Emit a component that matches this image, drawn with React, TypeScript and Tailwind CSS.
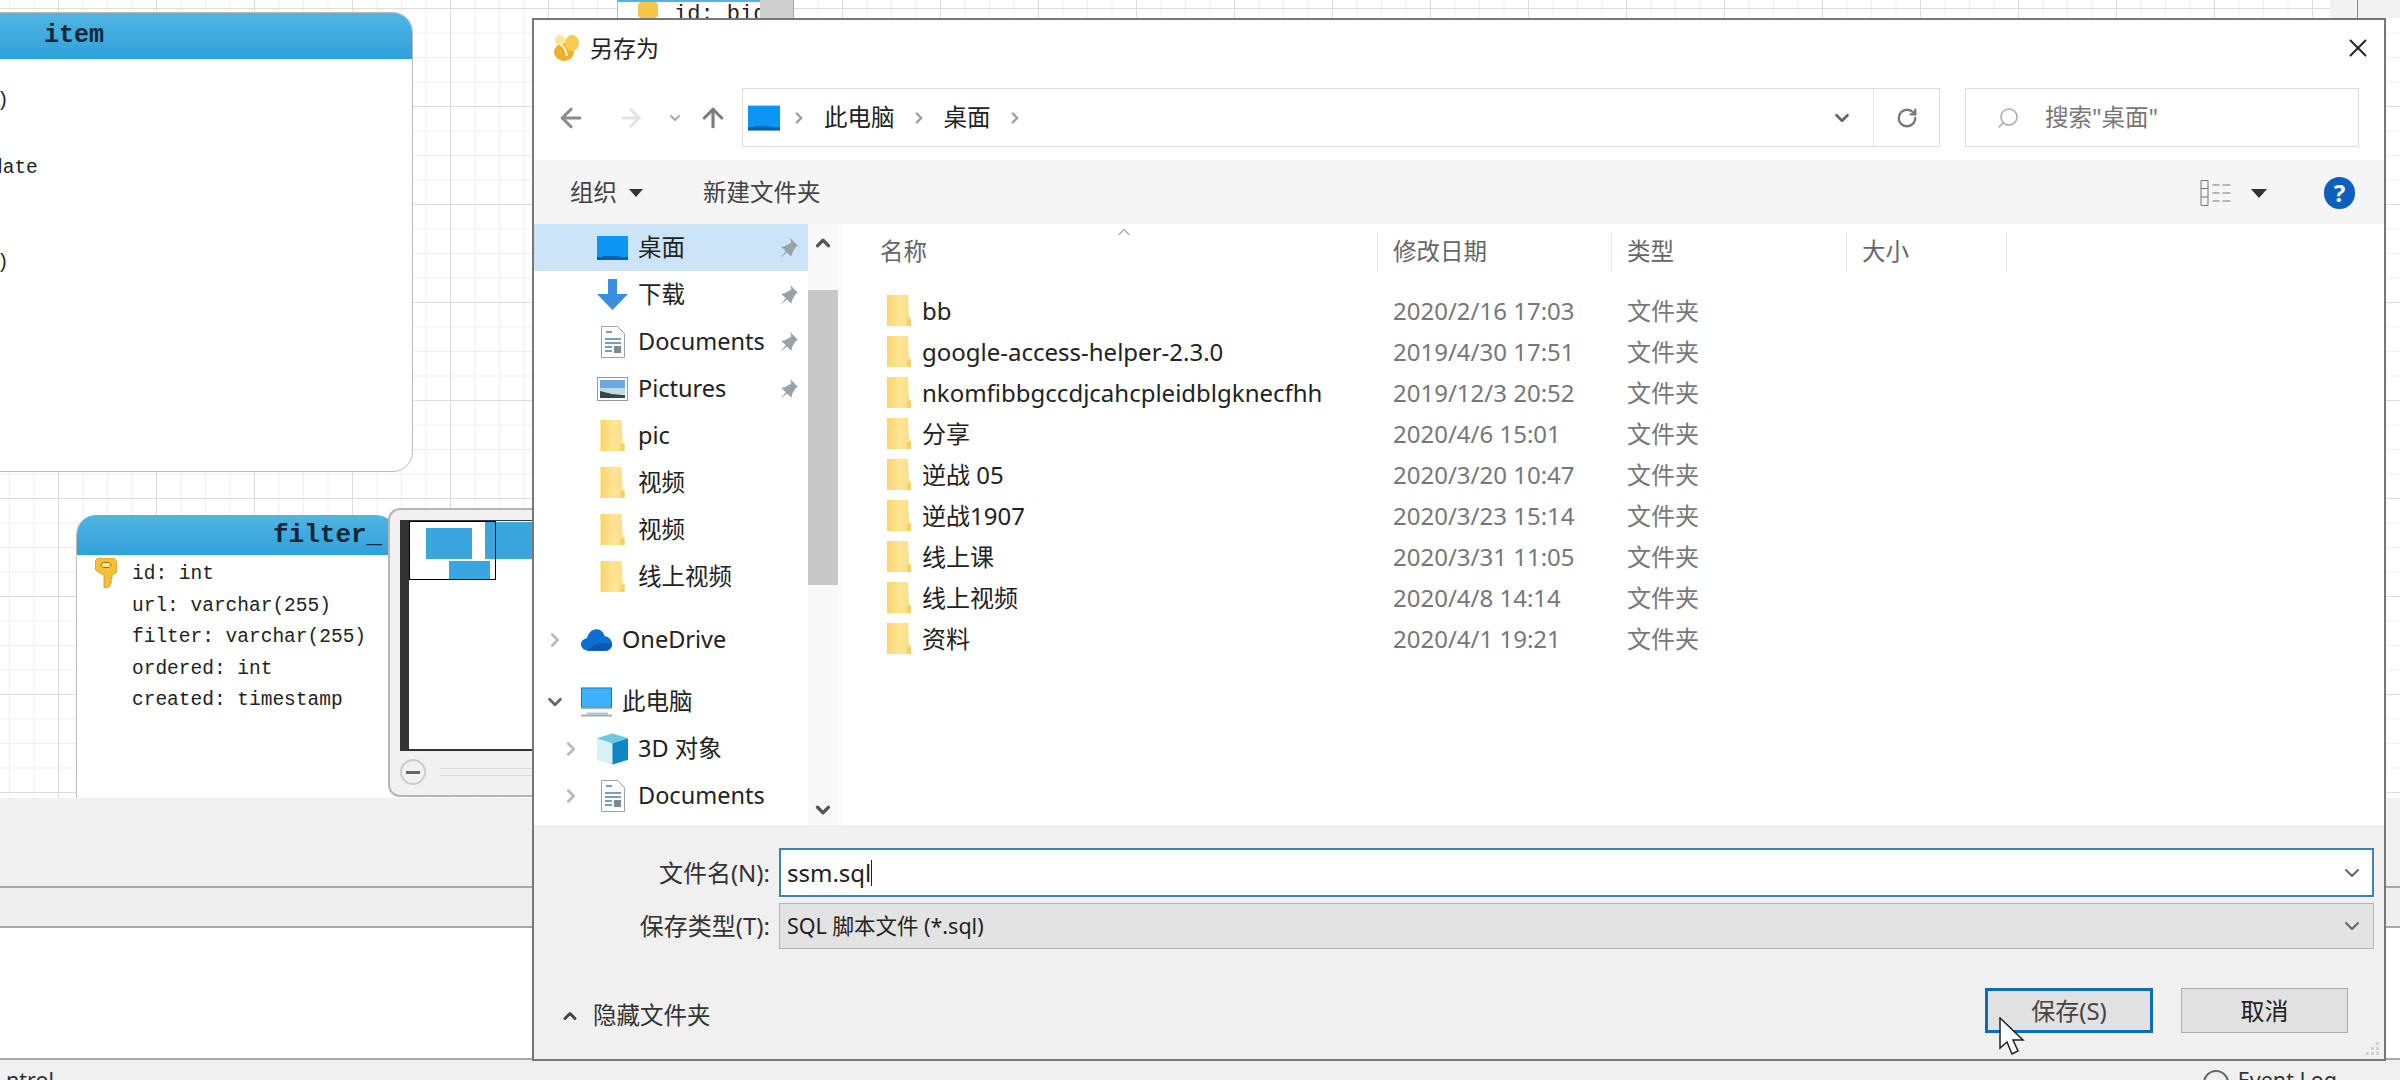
import React from "react";
import { ArrowLeft, ArrowRight, ArrowUp, ChevronDown, ChevronRight, ChevronUp, RotateCw, Search, X } from "lucide-react";

const SANS = "font-['Noto_Sans','Noto_Sans_CJK_SC',sans-serif]";
const MONO = "font-['Liberation_Mono','Noto_Sans_CJK_SC',monospace]";

const files = [
  { name: "bb", date: "2020/2/16 17:03" },
  { name: "google-access-helper-2.3.0", date: "2019/4/30 17:51" },
  { name: "nkomfibbgccdjcahcpleidblgknecfhh", date: "2019/12/3 20:52" },
  { name: "分享", date: "2020/4/6 15:01" },
  { name: "逆战 05", date: "2020/3/20 10:47" },
  { name: "逆战1907", date: "2020/3/23 15:14" },
  { name: "线上课", date: "2020/3/31 11:05" },
  { name: "线上视频", date: "2020/4/8 14:14" },
  { name: "资料", date: "2020/4/1 19:21" },
];

const filterFields = ["id: int", "url: varchar(255)", "filter: varchar(255)", "ordered: int", "created: timestamp"];

function Folder({ className }: { className: string }) {
  return (
    <svg viewBox="0 0 24 31" className={className}>
      <defs>
        <linearGradient id="folderFill" x1="0" x2="1" y1="0" y2="0">
          <stop offset="0" stopColor="#fbd56c" />
          <stop offset="0.55" stopColor="#ffe596" />
          <stop offset="1" stopColor="#fcdc85" />
        </linearGradient>
      </defs>
      <path d="M0 0h21l1 22 2 1v8H0z" fill="url(#folderFill)" />
      <path d="M20 24h4v7h-4z" fill="#f7cf63" />
    </svg>
  );
}

function Desktop({ className }: { className: string }) {
  return (
    <svg viewBox="0 0 31 24" className={className}>
      <rect width="31" height="24" fill="#0b96f5" />
      <rect y="21" width="31" height="3" fill="#0a5fa8" />
      <rect x="6" y="20" width="16" height="1" fill="#0a5fa8" />
    </svg>
  );
}

function Download() {
  return (
    <svg viewBox="0 0 31 31" className="h-[31px] w-[31px]">
      <path d="M11 0h9v15h11L15.500 31 0 15h11z" fill="#3a8de0" />
    </svg>
  );
}

function DocIcon() {
  return (
    <svg viewBox="0 0 24 32" className="h-[32px] w-[24px]">
      <path d="M.5.500h16l7 7v24H.500z" fill="#fff" stroke="#98a3ad" />
      <path d="M5 6h6M4 13h16M4 17h16M4 21h7M4 25h7" stroke="#4d7fb0" strokeWidth="1.500" />
      <rect x="13" y="20" width="7" height="7" fill="#7d8a94" />
    </svg>
  );
}

function PicIcon() {
  return (
    <svg viewBox="0 0 31 24" className="h-[24px] w-[31px]">
      <rect x=".5" y=".5" width="30" height="23" fill="#fff" stroke="#8f9ca8" />
      <rect x="3" y="3" width="25" height="8" fill="#6aa8de" />
      <rect x="3" y="11" width="25" height="6" fill="#c9d7de" />
      <path d="M3 14l12 3 13 1v3H3z" fill="#2f4a4a" />
    </svg>
  );
}

function Cloud() {
  return (
    <svg viewBox="0 0 32 22" className="h-[22px] w-[32px]">
      <path d="M8 22C3 22 0 19 0 15.500S3 9.500 6 9.500C7.500 4 11 0 16 0c4 0 7 2.500 8.500 7C29 7.500 32 11 32 15s-3 7-7 7z" fill="#0f6fd0" />
      <path d="M6 22c6-6 12-9 26-7 0 4-3 7-7 7z" fill="#0a58b0" />
    </svg>
  );
}

function Monitor() {
  return (
    <svg viewBox="0 0 32 30" className="h-[30px] w-[32px]">
      <rect x=".5" y=".5" width="31" height="20" fill="#3fb0fb" stroke="#1f6fae" />
      <rect y="20" width="32" height="2" fill="#8a99a6" />
      <rect x="6" y="26" width="22" height="2" fill="#b5bcc2" />
      <rect y="28" width="32" height="2" fill="#a4abb1" />
    </svg>
  );
}

function Cube() {
  return (
    <svg viewBox="0 0 32 32" className="h-[32px] w-[32px]">
      <path d="M16 0l16 5v22l-16 5-16-5V5z" fill="#a9e2ef" />
      <path d="M0 5l16 5v22L0 27z" fill="#d8f1f5" />
      <path d="M16 10l16-5v22l-16 5z" fill="#0f86c4" />
      <path d="M0 5l16-5 16 5-16 5z" fill="#6fc7e2" />
    </svg>
  );
}

function Pin() {
  return (
    <svg viewBox="0 0 20 20" className="h-[22px] w-[22px]">
      <path d="M12 1l7 7-2 1-3 5-1 4-4-4-6 5 5-6-4-4 4-1 5-3z" fill="#98a2ab" />
    </svg>
  );
}

function KeyIcon({ className }: { className: string }) {
  return (
    <svg viewBox="0 0 22 30" className={className}>
      <path d="M3 0h16l3 4v10l-5 3v4l-2 1 2 2-2 2v2l-3 2H9V17l-6-3-3-3V3z" fill="#f7bf35" stroke="#c9962a" strokeWidth=".8" />
      <ellipse cx="11" cy="7" rx="5" ry="2.600" fill="#fbe39a" stroke="#9a7414" />
    </svg>
  );
}

function SideRow({ icon, label, pin, selected, indent }: { icon: React.ReactNode; label: string; pin?: boolean; selected?: boolean; indent?: React.ReactNode }) {
  return (
    <div className={`flex h-[47px] items-center text-[23.500px] text-[#222] ${selected ? "bg-[#cce4f8]" : ""}`}>
      {indent}
      <span className="flex w-[31px] shrink-0 justify-center">{icon}</span>
      <span className="ml-[10px] whitespace-nowrap">{label}</span>
      {pin && <span className="ml-auto mr-[9px]"><Pin /></span>}
    </div>
  );
}

function SaveDialog() {
  const pinned = <span className="w-[63px] shrink-0" />;
  const treeRoot = (open: boolean) => (
    <span className="flex w-[22px] shrink-0 justify-center">
      {open ? <ChevronDown className="size-[22px] text-[#666]" strokeWidth={3} /> : <ChevronRight className="size-[22px] text-[#bbb]" strokeWidth={3} />}
    </span>
  );
  return (
    <div className={`absolute left-[532px] top-[18px] flex h-[1043px] w-[1854px] flex-col border-2 border-[#777] bg-white ${SANS}`}>
      {/* title bar */}
      <div className="flex h-[56px] shrink-0 items-center pl-[18px] pr-[11px]">
        <svg viewBox="0 0 28 28" className="h-[28px] w-[28px]">
          <ellipse cx="12" cy="18" rx="10" ry="9" fill="#eeb02a" />
          <ellipse cx="20" cy="9" rx="7" ry="8" fill="#f7cc4f" />
          <ellipse cx="8" cy="6" rx="5" ry="5" fill="#fbe59a" />
          <path d="M8 10c4 2 6 6 7 12" stroke="#fff3c4" strokeWidth="2" fill="none" />
        </svg>
        <span className="ml-[10px] text-[23px] text-[#222]">另存为</span>
        <X className="ml-auto size-[30px] text-[#222]" strokeWidth={1.500} />
      </div>
      {/* navigation row */}
      <div className="flex h-[84px] shrink-0 items-start pt-[12px]">
        <div className="flex h-[59px] w-[208px] shrink-0 items-center pl-[22px]">
          <ArrowLeft className="size-[30px] text-[#8a8a8a]" strokeWidth={2.500} />
          <ArrowRight className="ml-[31px] size-[28px] text-[#e2e2e2]" strokeWidth={2.500} />
          <ChevronDown className="ml-[22px] size-[16px] text-[#aaa]" strokeWidth={3} />
          <ArrowUp className="ml-[15px] size-[30px] text-[#7c7c7c]" strokeWidth={2.500} />
        </div>
        <div className="flex h-[59px] w-[1198px] items-center border border-[#dedede] pl-[5px] text-[23.500px] text-[#222]">
          <Desktop className="h-[26px] w-[32px]" />
          <ChevronRight className="ml-[10px] size-[18px] text-[#999]" strokeWidth={3} />
          <span className="ml-[16px]">此电脑</span>
          <ChevronRight className="ml-[15px] size-[18px] text-[#999]" strokeWidth={3} />
          <span className="ml-[16px]">桌面</span>
          <ChevronRight className="ml-[15px] size-[18px] text-[#999]" strokeWidth={3} />
          <ChevronDown className="ml-auto mr-[20px] size-[22px] text-[#666]" strokeWidth={3} />
          <div className="flex h-full w-[66px] items-center justify-center border-l border-[#e4e4e4]">
            <RotateCw className="size-[22px] text-[#777]" strokeWidth={2.500} />
          </div>
        </div>
        <div className="ml-[25px] flex h-[59px] w-[394px] items-center border border-[#dedede] pl-[30px] text-[23.500px] text-[#777]">
          <Search className="size-[24px] -scale-x-100 text-[#aaa]" strokeWidth={1.500} />
          <span className="ml-[25px]">搜索"桌面"</span>
        </div>
      </div>
      {/* toolbar */}
      <div className="flex h-[64px] shrink-0 items-center bg-[#f5f5f5] pl-[36px] pr-[29px] pt-[2px] text-[23.500px] text-[#444]">
        <span>组织</span>
        <span className="ml-[12px] h-0 w-0 border-x-[7px] border-t-[8px] border-x-transparent border-t-[#333]" />
        <span className="ml-[60px]">新建文件夹</span>
        <svg viewBox="0 0 32 26" className="ml-auto h-[26px] w-[33px]">
          <path d="M.5.500h7v25h-7zM.5 8.500h7M.5 17h7M12 5h7M22 5h8M12 13h7M22 13h8M12 21h7M22 21h8" fill="none" stroke="#777" />
        </svg>
        <span className="ml-[18px] h-0 w-0 border-x-[8px] border-t-[9px] border-x-transparent border-t-[#333]" />
        <span className="ml-[57px] flex h-[32px] w-[31px] items-center justify-center rounded-full bg-[#0f5fc0] text-[24px] font-bold text-white">?</span>
      </div>
      {/* body */}
      <div className="flex h-[601px] shrink-0">
        <div className="w-[274px] shrink-0">
          <SideRow selected icon={<Desktop className="h-[24px] w-[31px]" />} label="桌面" pin indent={pinned} />
          <SideRow icon={<Download />} label="下载" pin indent={pinned} />
          <SideRow icon={<DocIcon />} label="Documents" pin indent={pinned} />
          <SideRow icon={<PicIcon />} label="Pictures" pin indent={pinned} />
          <SideRow icon={<Folder className="h-[31px] w-[27px]" />} label="pic" indent={pinned} />
          <SideRow icon={<Folder className="h-[31px] w-[27px]" />} label="视频" indent={pinned} />
          <SideRow icon={<Folder className="h-[31px] w-[27px]" />} label="视频" indent={pinned} />
          <SideRow icon={<Folder className="h-[31px] w-[27px]" />} label="线上视频" indent={pinned} />
          <div className="mt-[16px]">
            <SideRow icon={<Cloud />} label="OneDrive" indent={<span className="ml-[10px] mr-[15px] flex">{treeRoot(false)}</span>} />
          </div>
          <div className="mt-[15px]">
            <SideRow icon={<Monitor />} label="此电脑" indent={<span className="ml-[10px] mr-[15px] flex">{treeRoot(true)}</span>} />
          </div>
          <SideRow icon={<Cube />} label="3D 对象" indent={<span className="ml-[26px] mr-[15px] flex">{treeRoot(false)}</span>} />
          <SideRow icon={<DocIcon />} label="Documents" indent={<span className="ml-[26px] mr-[15px] flex">{treeRoot(false)}</span>} />
        </div>
        <div className="flex w-[30px] shrink-0 flex-col items-center bg-[#f8f8f8]">
          <ChevronUp className="mt-[8px] size-[22px] text-[#555]" strokeWidth={3.500} />
          <div className="mt-[36px] h-[295px] w-full bg-[#c8c8c8]" />
          <ChevronDown className="mt-auto mb-[4px] size-[22px] text-[#555]" strokeWidth={3.500} />
        </div>
        <div className="w-[4px] shrink-0 bg-[#fbfbfb]" />
        <div className="relative min-w-0 flex-1">
          <ChevronUp className="absolute left-[272px] top-[-2px] size-[20px] text-[#aaa]" strokeWidth={1.500} />
          <div className="flex h-[56px] items-center text-[23.500px] text-[#666]">
            <div className="flex h-[40px] w-[536px] items-center border-r border-[#e8e8e8] pl-[38px]">名称</div>
            <div className="flex h-[40px] w-[234px] items-center border-r border-[#e8e8e8] pl-[15px]">修改日期</div>
            <div className="flex h-[40px] w-[235px] items-center border-r border-[#e8e8e8] pl-[15px]">类型</div>
            <div className="flex h-[40px] w-[160px] items-center border-r border-[#e8e8e8] pl-[15px]">大小</div>
          </div>
          <div className="pt-[10px] text-[24px]">
            {files.map((f) => (
              <div key={f.date} className="flex h-[41px] items-center pl-[45px]">
                <Folder className="h-[31px] w-[24px] shrink-0" />
                <span className="ml-[11px] w-[471px] shrink-0 whitespace-nowrap text-[#222]">{f.name}</span>
                <span className="w-[234px] shrink-0 text-[#777]">{f.date}</span>
                <span className="text-[#777]">文件夹</span>
              </div>
            ))}
          </div>
        </div>
      </div>
      {/* footer */}
      <div className="relative min-h-0 flex-1 bg-[#f0f0f0] pr-[10px] pt-[23px] text-[24px] text-[#333]">
        <div className="flex h-[49px] items-center">
          <span className="w-[236px] shrink-0 whitespace-nowrap text-right">文件名(N):</span>
          <div className="ml-[9px] flex h-full flex-1 items-center border-2 border-[#3f83b5] bg-white pl-[6px] pr-[8px] text-[#222]">
            <span>ssm.sql</span>
            <span className="h-[26px] w-px bg-[#222]" />
            <ChevronDown className="ml-auto size-[24px] text-[#666]" strokeWidth={2} />
          </div>
        </div>
        <div className="mt-[6px] flex h-[46px] items-center">
          <span className="w-[236px] shrink-0 whitespace-nowrap text-right">保存类型(T):</span>
          <div className="ml-[9px] flex h-full flex-1 items-center border border-[#b5b5b5] bg-[#e3e3e3] pl-[7px] pr-[9px] text-[21.500px] text-[#222]">
            <span>SQL 脚本文件 (*.sql)</span>
            <ChevronDown className="ml-auto size-[24px] text-[#666]" strokeWidth={2} />
          </div>
        </div>
        <div className="mt-[39px] flex h-[45px] items-center pl-[26px] pr-[26px]">
          <ChevronUp className="mt-[10px] size-[20px] text-[#444]" strokeWidth={3.500} />
          <span className="ml-[13px] mt-[10px] text-[23.500px] text-[#333]">隐藏文件夹</span>
          <button className="ml-auto flex h-full w-[168px] items-center justify-center border-[3px] border-[#0d6bb8] bg-[#e1e1e1] text-[#444]">保存(S)</button>
          <button className="ml-[28px] flex h-full w-[167px] items-center justify-center border border-[#adadad] bg-[#e1e1e1] text-[#222]">取消</button>
        </div>
        {/* resize grip */}
        <svg viewBox="0 0 18 18" className="absolute bottom-[1px] right-[3px] h-[18px] w-[18px]">
          <path d="M13 2h3v3h-3zM13 7h3v3h-3zM8 7h3v3H8zM13 12h3v3h-3zM8 12h3v3H8zM3 12h3v3H3z" fill="#d2d2d2" />
        </svg>
      </div>
      {/* mouse pointer over the save button */}
      <svg viewBox="0 0 26 40" className="absolute left-[1465px] top-[997px] h-[40px] w-[26px]">
        <path d="M1 1v30l7-6 5 12 6-3-5-11h10z" fill="#fff" stroke="#222" strokeWidth="1.500" />
      </svg>
    </div>
  );
}

function Diagram() {
  return (
    <div className={`relative h-[798px] overflow-hidden bg-white bg-[linear-gradient(#dcdcdc_1px,transparent_1px),linear-gradient(90deg,#dcdcdc_1px,transparent_1px),linear-gradient(#efefef_1px,transparent_1px),linear-gradient(90deg,#efefef_1px,transparent_1px)] bg-[size:98px_98px,98px_98px,24.5px_24.5px,24.5px_24.5px] bg-[position:0_8px,58px_0,0_8px,58px_0] ${MONO}`}>
      {/* item */}
      <div className="absolute -left-[40px] top-[12px] h-[460px] w-[453px] overflow-hidden rounded-[20px] border border-[#bbb] bg-white">
        <div className="flex h-[46px] items-center bg-gradient-to-b from-[#4fb5e3] to-[#2fa0da] pl-[83px] text-[25px] font-bold text-[#14263a]">item</div>
        <div className="relative text-[19.500px] text-[#222]">
          <span className="absolute left-[36px] top-[28px]">)</span>
          <span className="absolute left-[30px] top-[95px]">date</span>
          <span className="absolute left-[36px] top-[190px]">)</span>
        </div>
      </div>
      {/* top table, cut off by the dialog */}
      <div className="absolute left-[617px] top-0 flex h-[18px] w-[177px] overflow-hidden border-r border-[#aaa] bg-white">
        <div className="relative flex-1 overflow-hidden border-l border-[#bbb] border-t-2 border-t-[#4fb5e3]">
          <span className="absolute left-[20px] top-0 h-[16px] w-[20px] rounded-sm bg-[#f7c548]" />
          <span className="absolute left-[56px] top-[1px] whitespace-nowrap text-[22px] leading-[24px] text-[#222]">id: big</span>
        </div>
        <div className="w-[33px] bg-[#cfcfcf]" />
      </div>
      {/* filter_ */}
      <div className="absolute left-[76px] top-[515px] h-[300px] w-[320px] overflow-hidden rounded-t-[20px] border-l border-[#bbb] bg-white">
        <div className="flex h-[40px] items-center bg-gradient-to-b from-[#4fb5e3] to-[#2fa0da] pl-[196px] text-[26px] font-bold text-[#14263a]">filter_</div>
        <div className="relative pl-[55px] pt-[4px] text-[19.500px] text-[#222]">
          <KeyIcon className="absolute left-[18px] top-[3px] h-[30px] w-[22px]" />
          {filterFields.map((f) => (
            <div key={f} className="flex h-[31.500px] items-center whitespace-nowrap">{f}</div>
          ))}
        </div>
      </div>
      {/* overview panel */}
      <div className="absolute left-[388px] top-[508px] h-[289px] w-[200px] rounded-[12px] border-2 border-[#b5b5b5] bg-[#f1f1f1] px-[10px] pt-[10px]">
        <div className="relative h-[231px] w-full overflow-hidden border-l-[9px] border-t border-b-2 border-[#333] bg-white">
          <div className="absolute left-[17px] top-[7px] h-[31px] w-[46px] bg-[#3aa5de]" />
          <div className="absolute left-[40px] top-[40px] h-[19px] w-[41px] bg-[#3aa5de]" />
          <div className="absolute left-[76px] top-[1px] h-[37px] w-[60px] bg-[#3aa5de]" />
          <div className="absolute left-0 top-0 h-[59px] w-[87px] border border-black" />
        </div>
        <div className="flex h-[42px] items-center">
          <span className="flex size-[26px] items-center justify-center rounded-full border-2 border-[#ccc]">
            <span className="h-[3px] w-[14px] bg-[#666]" />
          </span>
          <span className="ml-[14px] h-[8px] flex-1 border-y border-[#d8d8d8]" />
        </div>
      </div>
      {/* right hand side panel */}
      <div className="absolute right-0 top-0 h-[18px] w-[70px] bg-[#f2f2f2]">
        <div className="ml-[27px] h-[18px] w-px bg-[#888]" />
      </div>
    </div>
  );
}

export default function App() {
  return (
    <div className={`relative flex h-[1080px] w-[2400px] flex-col overflow-hidden bg-white ${SANS}`}>
      <Diagram />
      <div className="h-[90px] shrink-0 border-b-2 border-[#a8a8a8] bg-[#f0f0f0]" />
      <div className="h-[40px] shrink-0 border-b-2 border-[#a8a8a8] bg-[#efefef]" />
      <div className="h-[130px] shrink-0 bg-white" />
      <div className="flex min-h-0 flex-1 items-start border-t-2 border-[#a8a8a8] bg-[#f0f0f0] pt-[6px] text-[21.500px] leading-[28px] text-[#333]">
        <span className="ml-[6px]">ntrol</span>
        <span className="ml-auto mr-[63px] flex items-start">
          <span className="mr-[9px] mt-[4px] size-[26px] shrink-0 rounded-full border-2 border-[#666]" />
          Event Log
        </span>
      </div>
      <SaveDialog />
    </div>
  );
}
